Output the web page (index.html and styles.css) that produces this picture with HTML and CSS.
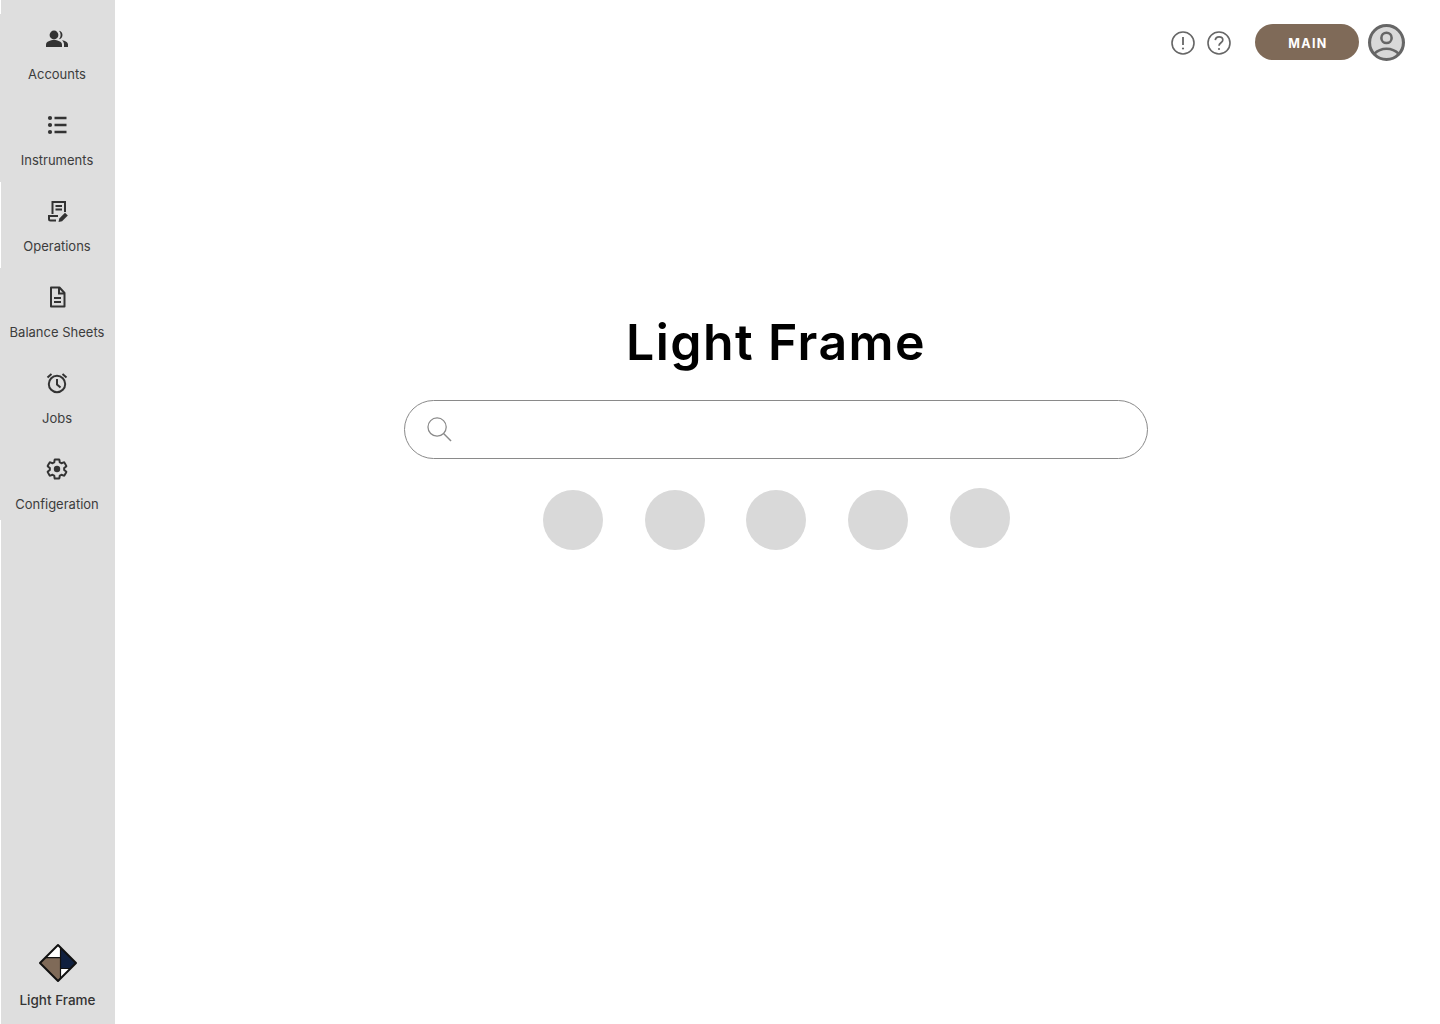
FILE: index.html
```
<!DOCTYPE html>
<html lang="en">
<head>
<meta charset="utf-8">
<title>Light Frame</title>
<link rel="stylesheet" href="styles.css">
</head>
<body>
<div class="app">
  <nav class="sidebar">
    <ul class="nav-list">
      <li class="nav-item nav-item-first">
        <svg class="nav-icon" viewBox="0 0 24 24"><circle cx="9" cy="8" r="4.400" fill="#333"/><path d="M1 20v-2.400C1 14.600 5.500 13 9 13s8 1.600 8 4.600V20z" fill="#333"/><path d="M14 3.700a4.400 4.400 0 0 1 0 8.600 6.500 6.500 0 0 0 0-8.600zM17 13.200c3.200.5 6 1.900 6 4.400V20h-4v-2.500c0-1.800-.6-3.200-2-4.300z" fill="#333"/></svg>
        <span class="nav-label">Accounts</span>
      </li>
      <li class="nav-item">
        <svg class="nav-icon" viewBox="0 0 24 24"><circle cx="5" cy="5" r="2.100" fill="#333"/><circle cx="5" cy="12" r="2.100" fill="#333"/><circle cx="5" cy="19" r="2.100" fill="#333"/><path d="M9.500 5H21.500M9.500 12H21.500M9.500 19H21.500" stroke="#333" stroke-width="2.400" fill="none"/></svg>
        <span class="nav-label">Instruments</span>
      </li>
      <li class="nav-item nav-item-inset">
        <svg class="nav-icon" viewBox="0 0 24 24" fill="none" stroke="#333" stroke-width="2"><path d="M7.500 15V3h12.500v10"/><path d="M10.500 7h6.500M10.500 10.500h6.500"/><path d="M11 21.500H5.500c-1 0-1.500-.7-1.500-1.500v-3h9"/><path d="M13.500 23l.8-3.500 5.700-5.700 2.800 2.800-5.700 5.700z" fill="#333" stroke="none"/></svg>
        <span class="nav-label">Operations</span>
      </li>
      <li class="nav-item">
        <svg class="nav-icon" viewBox="0 0 24 24" fill="none" stroke="#333" stroke-width="2"><path d="M6 2.500h8.500L19.500 8v13.500H6z" stroke-linejoin="round"/><path d="M14 2.500V8.500H19.500"/><path d="M9 13h7M9 17h7"/></svg>
        <span class="nav-label">Balance Sheets</span>
      </li>
      <li class="nav-item">
        <svg class="nav-icon" viewBox="0 0 24 24" fill="none" stroke="#333" stroke-width="2"><circle cx="12" cy="13" r="8.200"/><path d="M12 8v5.500l3.500 3"/><path d="M2.500 6.500l4-3.500M21.500 6.500l-4-3.500"/></svg>
        <span class="nav-label">Jobs</span>
      </li>
      <li class="nav-item nav-item-last">
        <svg class="nav-icon" viewBox="0 0 24 24" fill="none"><path d="M19.140 12.940c.04-.3.06-.61.06-.94 0-.32-.02-.64-.07-.94l2.030-1.580c.18-.14.23-.41.12-.61l-1.920-3.320c-.12-.22-.37-.29-.59-.22l-2.390.96c-.5-.38-1.030-.7-1.620-.94l-.36-2.540c-.04-.24-.24-.41-.48-.41h-3.840c-.24 0-.43.17-.47.41l-.36 2.540c-.59.24-1.130.57-1.620.94l-2.390-.96c-.22-.08-.47 0-.59.22L2.740 8.870c-.12.21-.08.47.12.61l2.030 1.580c-.05.3-.09.63-.09.94s.02.64.07.94l-2.030 1.580c-.18.14-.23.41-.12.61l1.920 3.320c.12.22.37.29.59.22l2.390-.96c.5.38 1.030.7 1.620.94l.36 2.540c.05.24.24.41.48.41h3.840c.24 0 .44-.17.47-.41l.36-2.540c.59-.24 1.130-.56 1.620-.94l2.390.96c.22.08.47 0 .59-.22l1.920-3.320c.12-.22.07-.47-.12-.61z" stroke="#333" stroke-width="2" stroke-linejoin="round"/><circle cx="12" cy="12" r="3.200" fill="#333"/></svg>
        <span class="nav-label">Configeration</span>
      </li>
    </ul>
    <div class="brand">
      <svg class="brand-logo" viewBox="0 0 40 40">
        <path d="M20 2L22.500 4.500V14.700H7.300z" fill="#fff"/>
        <path d="M22.500 4.500L38 20 32.500 25.500H22.500z" fill="#10203f"/>
        <path d="M22.500 25.500H32.500L22.500 35.500z" fill="#fff"/>
        <path d="M7.300 14.700H22.500V35.500L20 38 2 20z" fill="#7f6a58"/>
        <path d="M22.500 4.500V35.500M7.300 14.700H22.500M22.500 25.500H32.500" fill="none" stroke="#111" stroke-width="1.200"/>
        <path d="M20 2L38 20 20 38 2 20z" fill="none" stroke="#111" stroke-width="2" stroke-linejoin="round"/>
      </svg>
      <span class="brand-label">Light Frame</span>
    </div>
  </nav>
  <main class="content">
    <header class="topbar">
      <svg class="help-icon" viewBox="0 0 24 24" fill="none" stroke="#666" stroke-width="1.600"><circle cx="12" cy="12" r="11"/><path d="M12 6v8" stroke-width="1.800"/><circle cx="12" cy="17.500" r="1.100" fill="#666" stroke="none"/></svg>
      <svg class="help-icon" viewBox="0 0 24 24" fill="none" stroke="#666" stroke-width="1.600"><circle cx="12" cy="12" r="11"/><path d="M8.300 9.200c.2-2.200 1.800-3.400 3.800-3.400 2.100 0 3.700 1.300 3.700 3.200 0 2.800-3.800 2.800-3.800 5.800" stroke-width="1.700"/><circle cx="12" cy="18" r="1.100" fill="#666" stroke="none"/></svg>
      <button class="env-button" type="button">MAIN</button>
      <svg class="avatar" viewBox="0 0 36 36"><circle cx="18" cy="18" r="16.500" fill="#d9d9d9" stroke="#666" stroke-width="3"/><circle cx="18" cy="13.500" r="5" fill="none" stroke="#666" stroke-width="2.500"/><path d="M6 29C9.500 25.500 13.500 24 18 24s8.500 1.500 12 5" fill="none" stroke="#666" stroke-width="2.500"/></svg>
    </header>
    <section class="hero">
      <h1 class="title">Light Frame</h1>
      <div class="search">
        <svg class="search-icon" viewBox="0 0 26 26" fill="none" stroke="#8a8a8a"><circle cx="10.500" cy="10.500" r="9.500" stroke-width="1.300"/><path d="M17.500 17.500l7.500 7.500" stroke-width="1.500"/></svg>
      </div>
      <div class="shortcuts">
        <span class="shortcut"></span>
        <span class="shortcut"></span>
        <span class="shortcut shortcut-tight"></span>
        <span class="shortcut"></span>
        <span class="shortcut shortcut-raised"></span>
      </div>
    </section>
  </main>
</div>
</body>
</html>
```
FILE: styles.css
```
* { box-sizing: border-box; }
html, body { margin: 0; padding: 0; height: 100%; background: #fff; }
body { font-family: Inter, "Open Sans", "Liberation Sans", sans-serif; }
.app { display: flex; height: 1024px; overflow: hidden; }
.sidebar { width: 115px; flex: none; background: #dedede; display: flex; flex-direction: column; justify-content: space-between; border-left: 1px solid #fff; padding-right: 2px; }
.nav-list { list-style: none; margin: 0; padding: 14px 0 0; }
.nav-item { height: 86px; margin: 0 -1px; background: #dedede; display: flex; flex-direction: column; align-items: center; padding-top: 17px; }
.nav-item-first { height: 82px; padding-top: 13px; }
.nav-item-last { height: 80px; }
.nav-item-inset { margin: 0; }
.nav-icon { width: 24px; height: 24px; display: block; }
.nav-label { margin-top: 14px; font-size: 13px; line-height: 18px; color: #3c3c3c; white-space: nowrap; }
.brand { display: flex; flex-direction: column; align-items: center; padding: 0 0 15px 1px; }
.brand-logo { width: 40px; height: 40px; display: block; }
.brand-label { margin-top: 8px; font-size: 13.500px; font-weight: 500; line-height: 18px; color: #333; }
.content { flex: 1; min-width: 0; display: flex; flex-direction: column; }
.topbar { display: flex; align-items: center; justify-content: flex-end; padding: 24px 35px 0 0; height: 60px; }
.help-icon { width: 24px; height: 24px; margin: 1px 12px 0 0; }
.help-icon + .help-icon { margin-right: 24px; }
.env-button { width: 104px; height: 36px; border: 0; border-radius: 18px; background: #7f6a58; color: #fff; font: 700 12.500px Inter, sans-serif; letter-spacing: 1.400px; margin-right: 9px; padding: 2px 0 0 2px; }
.avatar { width: 37px; height: 37px; flex: none; }
.hero { display: flex; flex-direction: column; align-items: center; padding: 252px 0 0 0; margin-right: 3px; }
.title { margin: 0; font-size: 50px; font-weight: 600; line-height: 60px; color: #000; letter-spacing: 1.400px; white-space: nowrap; }
.search { width: 744px; height: 59px; margin-top: 28px; border: 1px solid #8a8a8a; border-radius: 30px; display: flex; align-items: center; padding-left: 22px; background: #fff; }
.search-icon { width: 25px; height: 25px; }
.shortcuts { display: flex; gap: 42px; margin-top: 31px; padding-left: 1px; align-items: flex-start; }
.shortcut { width: 60px; height: 60px; border-radius: 50%; background: #d9d9d9; }
.shortcut-tight { margin-left: -1px; }
.shortcut-raised { margin-top: -2px; }
```
